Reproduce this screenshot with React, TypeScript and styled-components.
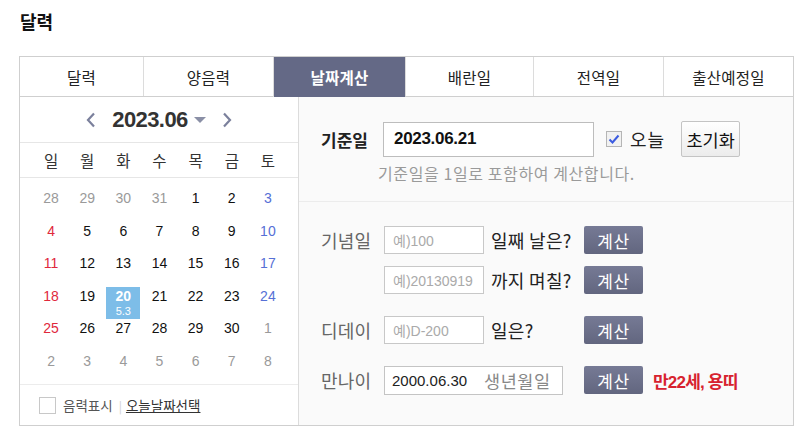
import React from "react";
import styled, { createGlobalStyle } from "styled-components";

const GlobalStyle = createGlobalStyle`
  html, body {
    margin: 0;
    padding: 0;
    background: #fff;
  }
  body {
    font-family: "Noto Sans CJK KR", "Liberation Sans", sans-serif;
    color: #222;
  }
`;

const KR = `"Liberation Sans", "Noto Sans CJK KR", sans-serif`;

const TABS = ["달력", "양음력", "날짜계산", "배란일", "전역일", "출산예정일"];
const WEEKDAYS = ["일", "월", "화", "수", "목", "금", "토"];

type TDay = { n: number; other?: boolean; lunar?: string; selected?: boolean };

const buildDays = (): TDay[] => {
  const days: TDay[] = [];
  [28, 29, 30, 31].forEach((n) => days.push({ n, other: true }));
  for (let i = 1; i <= 30; i++) {
    days.push(i === 20 ? { n: i, lunar: "5.3", selected: true } : { n: i });
  }
  for (let i = 1; i <= 8; i++) days.push({ n: i, other: true });
  return days;
};

const App = () => {
  const days = buildDays();

  return (
    <Page>
      <GlobalStyle />
      <Title>달력</Title>

      <Box>
        <Tabs>
          {TABS.map((t) => (
            <Tab key={t} active={t === "날짜계산"}>
              {t}
            </Tab>
          ))}
        </Tabs>

        <Body>
          <CalendarPanel>
            <MonthHeader>
              <Arrow viewBox="0 0 10 16">
                <path d="M8 1.5 L2 8 L8 14.5" />
              </Arrow>
              <MonthLabel>2023.06</MonthLabel>
              <Caret />
              <Arrow viewBox="0 0 10 16">
                <path d="M2 1.5 L8 8 L2 14.5" />
              </Arrow>
            </MonthHeader>

            <WeekRow>
              {WEEKDAYS.map((w) => (
                <WeekCell key={w}>{w}</WeekCell>
              ))}
            </WeekRow>

            <DayGrid>
              {days.map((d, i) => {
                const col = i % 7;
                const tone = d.other
                  ? "other"
                  : col === 0
                  ? "sun"
                  : col === 6
                  ? "sat"
                  : "normal";
                return (
                  <DayCell key={i}>
                    <DayBox selected={d.selected} tone={tone}>
                      <DayNum>{d.n}</DayNum>
                      {d.lunar && <Lunar>{d.lunar}</Lunar>}
                    </DayBox>
                  </DayCell>
                );
              })}
            </DayGrid>

            <CalFooter>
              <EmptyCheck />
              <FooterText>음력표시</FooterText>
              <Sep>|</Sep>
              <FooterLink>오늘날짜선택</FooterLink>
            </CalFooter>
          </CalendarPanel>

          <CalcPanel>
            <BaseSection>
              <BaseRow>
                <BaseLabel>기준일</BaseLabel>
                <BaseInput>2023.06.21</BaseInput>
                <CheckedBox>
                  <svg viewBox="0 0 16 16" width="16" height="16">
                    <path
                      d="M3.5 8.5 L6.5 11.5 L12.5 4.5"
                      fill="none"
                      stroke="#3b5be0"
                      strokeWidth="2"
                    />
                  </svg>
                </CheckedBox>
                <TodayText>오늘</TodayText>
                <ResetButton>초기화</ResetButton>
              </BaseRow>
              <Hint>기준일을 1일로 포함하여 계산합니다.</Hint>
            </BaseSection>

            <CalcSection>
              <Group>
                <CalcRow>
                  <RowLabel>기념일</RowLabel>
                  <Field>
                    <SmallInput>예)100</SmallInput>
                    <Question>일째 날은?</Question>
                  </Field>
                  <CalcButton>계산</CalcButton>
                </CalcRow>
                <CalcRow>
                  <RowLabel />
                  <Field>
                    <SmallInput>예)20130919</SmallInput>
                    <Question>까지 며칠?</Question>
                  </Field>
                  <CalcButton>계산</CalcButton>
                </CalcRow>
              </Group>

              <CalcRow>
                <RowLabel>디데이</RowLabel>
                <Field>
                  <SmallInput>예)D-200</SmallInput>
                  <Question>일은?</Question>
                </Field>
                <CalcButton>계산</CalcButton>
              </CalcRow>

              <CalcRow>
                <RowLabel>만나이</RowLabel>
                <Field>
                  <BirthInput>
                    <BirthValue>2000.06.30</BirthValue>
                    <BirthHint>생년월일</BirthHint>
                  </BirthInput>
                </Field>
                <CalcButton>계산</CalcButton>
                <Result>만22세, 용띠</Result>
              </CalcRow>
            </CalcSection>
          </CalcPanel>
        </Body>
      </Box>
    </Page>
  );
};

const Page = styled.div`
  width: 810px;
  height: 437px;
  padding: 0 16px 0 19px;
  box-sizing: border-box;
`;

const Title = styled.h1`
  margin: 0;
  padding: 8px 0 0 1px;
  height: 56px;
  box-sizing: border-box;
  font-size: 18px;
  line-height: 26px;
  font-weight: 700;
  color: #111;
`;

const Box = styled.div`
  width: 775px;
  border: 1px solid #cfcfcf;
  box-sizing: border-box;
`;

const Tabs = styled.div`
  display: grid;
  grid-template-columns: 123px 130px 132px 128px 130px 1fr;
  height: 39px;
  border-bottom: 1px solid #cfcfcf;
`;

type TTab = { active?: boolean };

const Tab = styled.div<TTab>`
  display: flex;
  align-items: center;
  justify-content: center;
  font-size: 15.5px;
  letter-spacing: 0.2px;
  border-left: 1px solid #dcdcdc;
  background: ${({ active }) => (active ? "#646986" : "#fff")};
  color: ${({ active }) => (active ? "#fff" : "#222")};
  font-weight: ${({ active }) => (active ? 700 : 400)};
  margin-bottom: ${({ active }) => (active ? "-1px" : "0")};

  &:first-child {
    border-left: none;
  }
`;

const Body = styled.div`
  display: flex;
  height: 328px;
`;

const CalendarPanel = styled.div`
  width: 278px;
  display: flex;
  flex-direction: column;
  border-right: 1px solid #dcdcdc;
  background: #fff;
`;

const MonthHeader = styled.div`
  height: 46px;
  display: flex;
  align-items: center;
  justify-content: center;
  border-bottom: 1px solid #e6e6e6;
  box-sizing: border-box;
`;

const Arrow = styled.svg`
  width: 10px;
  height: 16px;
  margin: 0 12px;
  fill: none;
  stroke: #7b809c;
  stroke-width: 2.2;
`;

const MonthLabel = styled.div`
  font-family: ${KR};
  font-size: 22px;
  font-weight: 700;
  letter-spacing: -0.6px;
  color: #333;
  margin: 0 6px 0 4px;
`;

const Caret = styled.span`
  width: 0;
  height: 0;
  border-left: 6px solid transparent;
  border-right: 6px solid transparent;
  border-top: 6px solid #8a8fa6;
  margin-right: 4px;
`;

const WeekRow = styled.div`
  display: grid;
  grid-template-columns: repeat(7, 1fr);
  padding: 0 12px 0 13px;
  height: 35px;
  align-items: center;
  border-bottom: 1px solid #e6e6e6;
  box-sizing: border-box;
`;

const WeekCell = styled.div`
  text-align: center;
  font-size: 15.5px;
  color: #333;
`;

const DayGrid = styled.div`
  display: grid;
  grid-template-columns: repeat(7, 1fr);
  grid-auto-rows: 32.5px;
  padding: 11px 12px 0 13px;
  height: 207px;
  box-sizing: border-box;
  border-bottom: 1px solid #ececec;
`;

const DayCell = styled.div`
  display: flex;
  justify-content: center;
`;

const TONES: Record<string, string> = {
  other: "#9a9a9a",
  sun: "#e0283c",
  sat: "#5670d6",
  normal: "#111",
};

type TDayBox = { selected?: boolean; tone: string };

const DayBox = styled.div<TDayBox>`
  width: 34px;
  height: 32px;
  display: flex;
  flex-direction: column;
  align-items: center;
  background: ${({ selected }) => (selected ? "#7dbde8" : "transparent")};
  color: ${({ selected, tone }) => (selected ? "#fff" : TONES[tone])};
  font-weight: ${({ selected }) => (selected ? 700 : 400)};
`;

const DayNum = styled.span`
  font-family: ${KR};
  font-size: 14px;
  line-height: 18px;
`;

const Lunar = styled.span`
  font-family: ${KR};
  font-size: 11px;
  line-height: 13px;
  font-weight: 400;
`;

const CalFooter = styled.div`
  flex: 1;
  display: flex;
  align-items: center;
  padding-left: 19px;
`;

const EmptyCheck = styled.span`
  width: 15px;
  height: 15px;
  border: 1px solid #c8c8c8;
  background: #fff;
  margin-right: 7px;
`;

const FooterText = styled.span`
  font-size: 13.5px;
  color: #555;
`;

const Sep = styled.span`
  font-size: 12px;
  color: #d0d0d0;
  margin: 0 4px 0 6px;
`;

const FooterLink = styled.span`
  font-size: 13.5px;
  color: #333;
  text-decoration: underline;
`;

const CalcPanel = styled.div`
  flex: 1;
  display: flex;
  flex-direction: column;
  background: #fafafa;
`;

const BaseSection = styled.div`
  height: 105px;
  box-sizing: border-box;
  padding: 24px 0 0 22px;
  border-bottom: 1px solid #ececec;
`;

const BaseRow = styled.div`
  display: flex;
  align-items: center;
  height: 36px;
`;

const BaseLabel = styled.div`
  width: 62px;
  font-size: 17px;
  font-weight: 700;
  color: #222;
`;

const BaseInput = styled.div`
  width: 211px;
  height: 35px;
  box-sizing: border-box;
  border: 1px solid #bdbdbd;
  background: #fff;
  padding-left: 10px;
  display: flex;
  align-items: center;
  font-family: ${KR};
  font-size: 17px;
  font-weight: 700;
  letter-spacing: -0.3px;
  color: #111;
`;

const CheckedBox = styled.span`
  width: 16px;
  height: 16px;
  box-sizing: border-box;
  border: 1px solid #b5b5b5;
  background: #f1f1f1;
  margin-left: 12px;
  display: flex;
  align-items: center;
  justify-content: center;

  svg {
    flex-shrink: 0;
  }
`;

const TodayText = styled.span`
  font-size: 18px;
  letter-spacing: 1px;
  margin-left: 8px;
  color: #222;
`;

const ResetButton = styled.div`
  width: 59px;
  height: 36px;
  box-sizing: border-box;
  margin-left: 16px;
  border: 1px solid #c4c4c4;
  border-radius: 2px;
  background: linear-gradient(#ffffff, #ececec);
  display: flex;
  align-items: center;
  justify-content: center;
  font-size: 17.5px;
  color: #111;
`;

const Hint = styled.div`
  margin: 6px 0 0 57px;
  font-size: 16px;
  line-height: 20px;
  color: #9a9a9a;
  letter-spacing: 0.6px;
`;

const CalcSection = styled.div`
  display: flex;
  flex-direction: column;
  gap: 22px;
  padding: 24px 0 0 22px;
`;

const Group = styled.div`
  display: flex;
  flex-direction: column;
  gap: 12px;
`;

const CalcRow = styled.div`
  display: flex;
  align-items: center;
  height: 28px;
`;

const RowLabel = styled.div`
  width: 63px;
  font-size: 18px;
  letter-spacing: 0.2px;
  color: #666;
`;

const Field = styled.div`
  width: 200px;
  display: flex;
  align-items: center;
`;

const SmallInput = styled.div`
  width: 100px;
  height: 28px;
  box-sizing: border-box;
  border: 1px solid #c8c8c8;
  background: #fff;
  padding-left: 8px;
  display: flex;
  align-items: center;
  font-family: ${KR};
  font-size: 14px;
  color: #aaa;
  white-space: nowrap;
  overflow: hidden;
`;

const Question = styled.span`
  margin-left: 7px;
  font-size: 18px;
  color: #222;
  white-space: nowrap;
  letter-spacing: 0.3px;
`;

const CalcButton = styled.div`
  width: 59px;
  height: 28px;
  border-radius: 2px;
  background: linear-gradient(#767a95, #62667f);
  color: #fff;
  display: flex;
  align-items: center;
  justify-content: center;
  font-size: 17px;
  letter-spacing: 0.5px;
`;

const BirthInput = styled.div`
  width: 179px;
  height: 29px;
  box-sizing: border-box;
  border: 1px solid #c4c4c4;
  background: #fff;
  padding-left: 7px;
  display: flex;
  align-items: center;
  font-family: ${KR};
  font-size: 15px;
`;

const BirthValue = styled.span`
  color: #222;
`;

const BirthHint = styled.span`
  margin-left: 17px;
  color: #888;
  font-size: 17.5px;
  letter-spacing: 0.5px;
`;

const Result = styled.span`
  margin-left: 10px;
  font-family: ${KR};
  font-size: 17px;
  font-weight: 700;
  letter-spacing: -0.8px;
  color: #d7222f;
`;

export default App;
